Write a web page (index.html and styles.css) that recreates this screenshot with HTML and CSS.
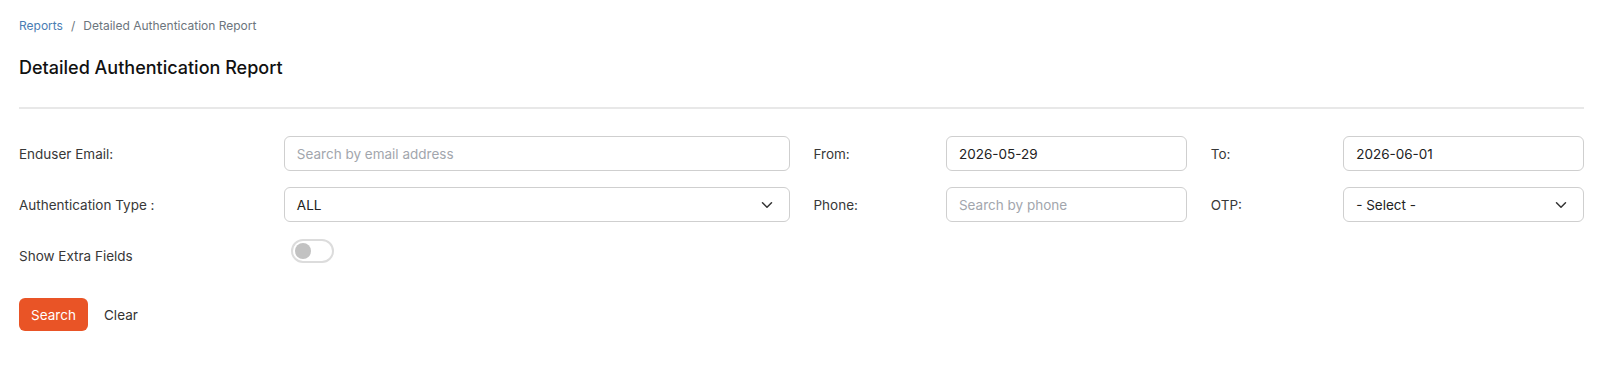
FILE: index.html
```html
<!DOCTYPE html>
<html lang="en">
<head>
<meta charset="utf-8">
<title>Detailed Authentication Report</title>
<link rel="stylesheet" href="styles.css">
</head>
<body>
<div class="page">
  <nav class="breadcrumb">
    <a href="#" class="crumb-link">Reports</a>
    <span class="crumb-sep">/</span>
    <span class="crumb-current">Detailed Authentication Report</span>
  </nav>
  <h1 class="title">Detailed Authentication Report</h1>
  <hr class="divider">
  <form class="filters">
    <div class="group">
      <label class="label">Enduser Email:</label>
      <div class="field"><input class="input" type="text" placeholder="Search by email address"></div>
    </div>
    <div class="group">
      <label class="label">From:</label>
      <div class="field"><input class="input" type="text" value="2026-05-29"></div>
    </div>
    <div class="group">
      <label class="label">To:</label>
      <div class="field"><input class="input" type="text" value="2026-06-01"></div>
    </div>

    <div class="group">
      <label class="label">Authentication Type :</label>
      <div class="field">
        <div class="select"><span>ALL</span>
          <svg class="chev" width="12" height="8" viewBox="0 0 12 8"><path d="M1.5 1.8 6 6.2l4.5-4.4" fill="none" stroke="#333" stroke-width="1.5" stroke-linecap="round" stroke-linejoin="round"/></svg>
        </div>
      </div>
    </div>
    <div class="group">
      <label class="label">Phone:</label>
      <div class="field"><input class="input" type="text" placeholder="Search by phone"></div>
    </div>
    <div class="group">
      <label class="label">OTP:</label>
      <div class="field">
        <div class="select"><span>- Select -</span>
          <svg class="chev" width="12" height="8" viewBox="0 0 12 8"><path d="M1.5 1.8 6 6.2l4.5-4.4" fill="none" stroke="#333" stroke-width="1.5" stroke-linecap="round" stroke-linejoin="round"/></svg>
        </div>
      </div>
    </div>

    <div class="group">
      <label class="label">Show Extra Fields</label>
      <div class="field field-top"><span class="switch"><span class="knob"></span></span></div>
    </div>
  </form>
  <div class="actions">
    <button class="btn-primary" type="button">Search</button>
    <button class="btn-link" type="button">Clear</button>
  </div>
</div>
</body>
</html>
```

FILE: styles.css
```css
* { box-sizing: border-box; }
body {
  margin: 0;
  background: #fff;
  font-family: Inter, "Noto Sans", sans-serif;
  color: #222;
}
.page {
  padding: 17px 20px 0 19px;
}
.breadcrumb {
  display: flex;
  align-items: center;
  gap: 8px;
  font-size: 12px;
  line-height: 18px;
  height: 18px;
}
.crumb-link { color: #4a7db3; text-decoration: none; }
.crumb-sep { color: #6c757d; }
.crumb-current { color: #6c757d; }
.title {
  margin: 20px 0 0;
  font-size: 18px;
  font-weight: 500;
  line-height: 26px;
  color: #111;
}
.divider {
  margin: 26px 0 0;
  border: 0;
  border-top: 2px solid #e8e8e8;
  height: 0;
}
.filters {
  margin-top: 27px;
  display: grid;
  grid-template-columns: calc((100% + 24px) / 2 - 24px) 1fr 1fr;
  column-gap: 24px;
  row-gap: 16px;
}
.group {
  display: grid;
  grid-template-columns: calc((100% + 24px) / 3 - 24px) 1fr;
  column-gap: 24px;
  align-items: center;
  min-height: 35px;
}
.label {
  font-size: 13.5px;
  color: #383838;
}
.field-top { align-self: start; padding-top: 1px; }
.input, .select {
  width: 100%;
  height: 35px;
  border: 1px solid #cfcfcf;
  border-radius: 6px;
  background: #fff;
  padding: 0 12px;
  font-family: inherit;
  font-size: 13.5px;
  color: #222;
  outline: none;
}
.input::placeholder { color: #a2a6ad; }
.select {
  display: flex;
  align-items: center;
  justify-content: space-between;
  padding-right: 16px;
}
.chev { display: block; }
.switch {
  display: block;
  width: 43px;
  height: 24px;
  margin-left: 7px;
  border: 2px solid #dcdcdc;
  border-radius: 12px;
  position: relative;
  background: #fff;
}
.knob {
  position: absolute;
  left: 2px;
  top: 2px;
  width: 16px;
  height: 16px;
  border-radius: 50%;
  background: #c2c2c2;
}
.actions {
  margin-top: 25px;
  display: flex;
  align-items: center;
  gap: 8px;
}
.btn-primary {
  height: 33px;
  width: 69px;
  border: 0;
  border-radius: 6px;
  background: #e95426;
  color: #fff;
  font-family: inherit;
  font-size: 13.5px;
  cursor: pointer;
}
.btn-link {
  border: 0;
  background: none;
  font-family: inherit;
  font-size: 13.5px;
  color: #333;
  padding: 0 8px;
}
```
